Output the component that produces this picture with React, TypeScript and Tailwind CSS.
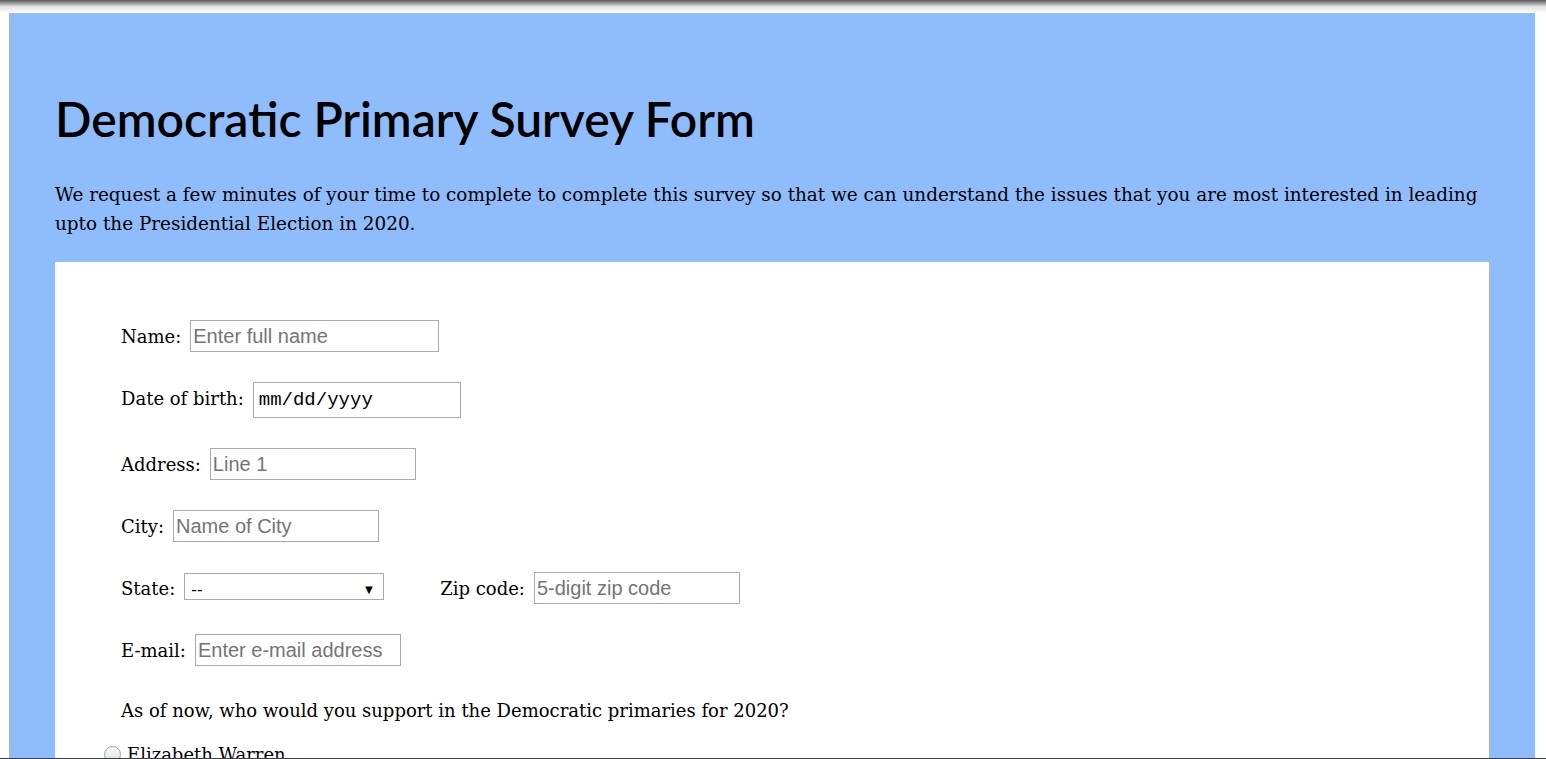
import React from 'react';

const serif = "font-['DejaVu_Serif',serif]";

const Field: React.FC<{ label: string; children: React.ReactNode; className?: string }> = ({ label, children, className }) => (
  <label className={`flex items-baseline gap-[9px] ${className ?? ''}`}>
    <span>{label}</span>
    {children}
  </label>
);

const inputCls =
  "h-[32px] border border-[#a9a9a9] px-[2px] font-['Liberation_Sans',sans-serif] text-[20px] text-black placeholder:text-[#757575] outline-none";

export default function App() {
  return (
    <div className="min-h-screen bg-white">
      {/* top shadow */}
      <div className="h-[13px] bg-gradient-to-b from-[#5a5a5a] via-[#e0e0e0] to-white" />

      <main className={`ml-[9px] w-[1526px] bg-[#8fbdfc] px-[46px] pt-[77px] text-black ${serif}`}>
        <h1 className="font-['Lato',sans-serif] text-[48px] font-semibold leading-[58px]">
          Democratic Primary Survey Form
        </h1>
        <p className="mt-[32px] text-[18.4px] leading-[29px]">
          We request a few minutes of your time to complete to complete this survey so that we can understand the issues that you are most interested in leading upto the Presidential Election in 2020.
        </p>

        <form className="mt-[24px] bg-white pl-[66px] pt-[58px] pb-10 text-[18px]">
          <div className="flex flex-col gap-[30px]">
            <Field label="Name:">
              <input className={`${inputCls} w-[249px]`} placeholder="Enter full name" />
            </Field>
            <Field label="Date of birth:">
              <div className="flex h-[36px] w-[208px] items-center border border-[#a9a9a9] px-[5px] font-['Liberation_Mono',monospace] text-[19px]">
                mm/dd/yyyy
              </div>
            </Field>
            <Field label="Address:">
              <input className={`${inputCls} w-[206px]`} placeholder="Line 1" />
            </Field>
            <Field label="City:">
              <input className={`${inputCls} w-[206px]`} placeholder="Name of City" />
            </Field>
            <div className="flex items-baseline">
              <Field label="State:" className="gap-[6px]">
                <div className="flex h-[27px] w-[200px] items-center justify-between border border-[#a9a9a9] pl-[6px] pr-[8px] pt-[6px] font-['Liberation_Sans',sans-serif] text-[17px]">
                  <span>--</span>
                  <span className="text-[13px]">▼</span>
                </div>
              </Field>
              <Field label="Zip code:" className="ml-[56px]">
                <input className={`${inputCls} w-[206px]`} placeholder="5-digit zip code" />
              </Field>
            </div>
            <Field label="E-mail:">
              <input className={`${inputCls} w-[206px]`} placeholder="Enter e-mail address" />
            </Field>
            <p className="mt-[1px]">As of now, who would you support in the Democratic primaries for 2020?</p>
          </div>
          <div className="-ml-[17px] mt-[17px] flex items-center gap-[6px]">
            <span className="h-[17px] w-[17px] rounded-full border border-[#a0a0a0] bg-gradient-to-b from-white to-[#dcdcdc]" />
            <span>Elizabeth Warren</span>
          </div>
        </form>
      </main>

      <div className="fixed bottom-0 left-0 h-px w-full bg-[#3d3d4a]" />
    </div>
  );
}
